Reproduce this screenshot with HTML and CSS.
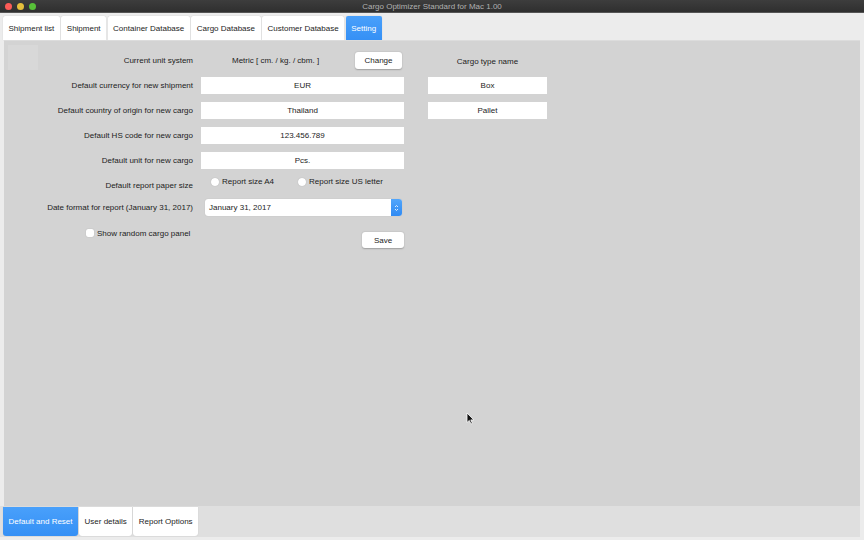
FILE: index.html
```html
<!DOCTYPE html>
<html lang="en">
<head>
    <meta charset="UTF-8">
    <title>Cargo Optimizer Standard for Mac 1.00</title>
    <link rel="stylesheet" href="styles.css">
</head>
<body>
    <div class="window">
        <div class="titlebar">
            <div class="lights">
                <span class="light red"></span>
                <span class="light yellow"></span>
                <span class="light green"></span>
            </div>
            <div class="title">Cargo Optimizer Standard for Mac 1.00</div>
        </div>

        <ul class="tabs">
            <li class="tab">Shipment list</li>
            <li class="tab">Shipment</li>
            <li class="tab">Container Database</li>
            <li class="tab">Cargo Database</li>
            <li class="tab">Customer Database</li>
            <li class="tab active">Setting</li>
        </ul>

        <div class="panel">
            <div class="corner"></div>
            <div class="form">
                <div class="label r1">Current unit system</div>
                <div class="unit r1">
                    <span class="metric">Metric [ cm. / kg. / cbm. ]</span>
                    <button class="btn change">Change</button>
                </div>
                <div class="cargo-head r1">Cargo type name</div>

                <div class="label r2">Default currency for new shipment</div>
                <div class="field r2">EUR</div>
                <div class="field cargo r2">Box</div>

                <div class="label r3">Default country of origin for new cargo</div>
                <div class="field r3">Thailand</div>
                <div class="field cargo r3">Pallet</div>

                <div class="label r4">Default HS code for new cargo</div>
                <div class="field r4">123.456.789</div>

                <div class="label r5">Default unit for new cargo</div>
                <div class="field r5">Pcs.</div>

                <div class="label r6 paper">Default report paper size</div>
                <div class="radios r6">
                    <label class="radio"><span class="dot"></span>Report size A4</label>
                    <label class="radio"><span class="dot"></span>Report size US letter</label>
                </div>

                <div class="label r7">Date format for report (January 31, 2017)</div>
                <div class="select r7">
                    <span>January 31, 2017</span>
                    <span class="stepper">
                        <svg width="5" height="8" viewBox="0 0 5 8"><path d="M1 3 L2.5 1.5 L4 3 M1 5 L2.5 6.5 L4 5" fill="none" stroke="#fff" stroke-width="0.8"/></svg>
                    </span>
                </div>

                <div class="label r8 check"><span class="box"></span>Show random cargo panel</div>
                <div class="save-cell r8"><button class="btn save">Save</button></div>
            </div>
            <svg class="cursor" width="9" height="13" viewBox="0 0 9 13"><path d="M1 1 L1 10.5 L3.3 8.4 L5 12 L6.4 11.3 L4.8 7.9 L7.8 7.9 Z" fill="#111" stroke="#fff" stroke-width="0.8"/></svg>
        </div>

        <div class="bottom">
            <ul class="tabs lower">
                <li class="tab active">Default and Reset</li>
                <li class="tab">User details</li>
                <li class="tab">Report Options</li>
            </ul>
        </div>
    </div>
</body>
</html>
```

FILE: styles.css
```css
*{
    box-sizing: border-box;
}
body{
    margin: 0;
    font-family: "Liberation Sans", Arial, sans-serif;
    font-size: 8px;
    color: #1c1c1c;
    background-color: #ececec;
}
ul{
    list-style: none;
    padding: 0;
    margin: 0;
}
.window{
    width: 864px;
    height: 540px;
    display: flex;
    flex-direction: column;
    overflow: hidden;
}
.titlebar{
    height: 13px;
    position: relative;
    display: flex;
    align-items: center;
    justify-content: center;
    background: linear-gradient(#3d3d3d, #2f2f2f);
    border-bottom: 1px solid #555;
}
.title{
    color: #b0b0b0;
    font-size: 8px;
}
.lights{
    position: absolute;
    left: 5px;
    top: 3px;
    display: flex;
    gap: 5px;
}
.light{
    width: 7px;
    height: 7px;
    border-radius: 50%;
}
.red{ background-color: #fc5b57; }
.yellow{ background-color: #e5bf3c; }
.green{ background-color: #57c038; }

.tabs{
    display: flex;
    gap: 1.5px;
    padding: 3px 0 0 3px;
    height: 27px;
}
.tab{
    height: 24px;
    padding: 0 5.5px;
    display: flex;
    align-items: center;
    background-color: #fff;
    border-radius: 2px 2px 0 0;
    box-shadow: 0 0 1px #bbb;
    white-space: nowrap;
}
.tab.active{
    background: linear-gradient(#49a0fb, #3590f5);
    color: #fff;
}

.panel{
    position: relative;
    height: 466px;
    margin: 0 4px;
    background-color: #d3d3d3;
    border-top: 1px solid #dcdcdc;
}
.corner{
    position: absolute;
    left: 4px;
    top: 4px;
    width: 30px;
    height: 25px;
    background-color: #d8d8d8;
}
.form{
    position: relative;
    display: grid;
    grid-template-columns: 189px 203px 135px;
    grid-template-rows: 17px 17px 17px 17px 17px 14px 17px 18px;
    column-gap: 8px;
    row-gap: 8px;
    padding-top: 11px;
}
.form > .cargo, .form > .cargo-head{
    margin-left: 16px;
}
.r1{ grid-row: 1; }
.r2{ grid-row: 2; }
.r3{ grid-row: 3; }
.r4{ grid-row: 4; }
.r5{ grid-row: 5; }
.r6{ grid-row: 6; }
.r7{ grid-row: 7; }
.r8{ grid-row: 8; margin-top: 6px; }

.label{
    grid-column: 1;
    display: flex;
    align-items: center;
    justify-content: flex-end;
    white-space: nowrap;
}
.label.paper{
    padding-top: 2px;
}
.field{
    grid-column: 2;
    display: flex;
    align-items: center;
    justify-content: center;
    background-color: #fff;
}
.field.cargo, .cargo-head{
    grid-column: 3;
}
.cargo-head{
    display: flex;
    align-items: center;
    justify-content: center;
    padding-top: 2px;
}
.unit{
    grid-column: 2;
    display: flex;
    align-items: center;
    padding-left: 31px;
}
.btn{
    font-family: inherit;
    font-size: 8px;
    color: #1c1c1c;
    background-color: #fff;
    border: none;
    border-radius: 3px;
    box-shadow: 0 0.5px 1.5px rgba(0, 0, 0, 0.25);
    padding: 0;
}
.change{
    margin-left: auto;
    margin-right: 2px;
    width: 47px;
    height: 17px;
}
.radios{
    grid-column: 2;
    display: flex;
    align-items: flex-start;
    padding-left: 10px;
    gap: 24px;
}
.radio{
    display: flex;
    align-items: center;
    gap: 3px;
    height: 9px;
}
.dot{
    width: 8px;
    height: 8px;
    border-radius: 50%;
    background-color: #fff;
    box-shadow: 0 0 1px #999;
}
.select{
    grid-column: 2;
    margin: 0 2px 0 4px;
    display: flex;
    align-items: center;
    justify-content: space-between;
    padding-left: 4px;
    background-color: #fff;
    border-radius: 3px;
    box-shadow: 0 0 1px #aaa;
}
.stepper{
    width: 11px;
    height: 17px;
    display: flex;
    align-items: center;
    justify-content: center;
    background: linear-gradient(#52a6fb, #2f8af3);
    border-radius: 0 3px 3px 0;
}
.check{
    justify-content: flex-start;
    padding-left: 82px;
    gap: 3px;
    align-items: flex-start;
    margin-top: 5px;
}
.box{
    width: 8px;
    height: 8px;
    background-color: #fff;
    border-radius: 2px;
    box-shadow: 0 0 1px #999;
}
.save-cell{
    grid-column: 2;
    display: flex;
    justify-content: flex-end;
    margin-top: 8px;
}
.save{
    width: 42px;
    height: 16px;
}
.cursor{
    position: absolute;
    left: 462px;
    top: 371px;
}

.bottom{
    height: 31px;
    margin-right: 4px;
    background-color: #dfdfdf;
}
.tabs.lower{
    padding: 1px 0 0 3px;
    gap: 1px;
    height: 31px;
}
.lower .tab{
    height: 29px;
    border-radius: 0 0 3px 3px;
}
```
